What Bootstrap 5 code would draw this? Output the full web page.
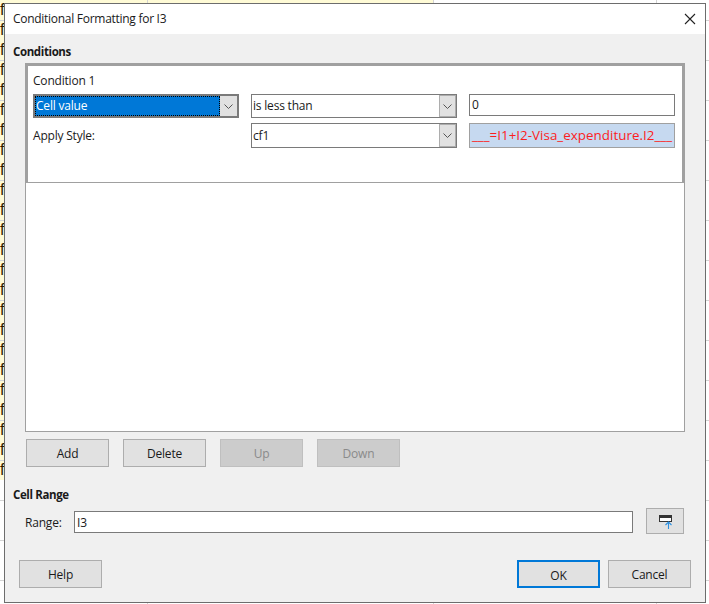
<!DOCTYPE html>
<html lang="en"><head><meta charset="utf-8"><title>Conditional Formatting for I3</title>
<link href="https://cdn.jsdelivr.net/npm/bootstrap@5.3.0/dist/css/bootstrap.min.css" rel="stylesheet">
<style>
html,body{height:604px;overflow:hidden}
body{background-color:#fff;padding:3px 0 0 4px;position:relative;font:12px/16px "Open Sans","Noto Sans",sans-serif;letter-spacing:-.2px;color:#1a1a1a;
 background-image:linear-gradient(#d4d4d4,#d4d4d4),linear-gradient(#d4d4d4,#d4d4d4),linear-gradient(#d4d4d4,#d4d4d4),repeating-linear-gradient(to bottom,transparent 0 20px,#d4d4d4 20px 21px,transparent 21px 40px),linear-gradient(#fffbd6,#fffbd6);
 background-size:1px 100%,1px 100%,1px 100%,100% 100%,433px 480px;background-position:147px 0,433px 0,656px 0,0 0,0 0;background-repeat:no-repeat}
.sheet-f{position:absolute;left:0;top:0;font:16px/20px "Liberation Sans",sans-serif;color:#2e1c00}
.sheet-f div{height:20px}
.dlg{width:702px;height:600px;border:1px solid #6d6d6d;background:#f0f0f0;position:relative;z-index:1;display:flex;flex-direction:column}
.dlg-title{height:30px;background:#fff;padding:0 9px 0 8px;letter-spacing:-.28px;flex:none}
.dlg-x{width:12px;height:12px}
.heading{font-weight:700;font-size:11.5px;letter-spacing:-.38px;padding-left:8px}
.heading-top{margin-top:10px}
.heading-range{margin-top:20px}
.cond-list{margin:3px 20px 0 20px;height:369px;background:#fff;border:1px solid #a0a0a0;flex:none}
.cond-entry{height:119px;border:2px solid #a0a0a0;border-bottom-width:1px;padding:7px 0 0 5px;margin:0}
.cond-grid{display:grid;grid-template-columns:206px 206px 206px;column-gap:12px;row-gap:5px;margin-top:5px;align-items:start}
.combo{height:24px;border:1px solid #7a7a7a;background:#fff;padding:3px 0 0 1px;display:flex;position:relative}
.combo.sel{background:#0078d7;color:#fff;border:2px solid #7a7a7a;padding:0;align-items:stretch}
.combo.sel .sel-txt{flex:1;margin-right:17px;padding:2px 0 0 1px;outline:1px dotted #000;outline-offset:-1px}
.combo.tall{height:25px;padding-top:4px}
.combo .arrow{position:absolute;right:0;top:0;bottom:0;width:17px;background:#e1e1e1;border:1px solid #adadad;display:flex;align-items:center;justify-content:center}
.combo.sel .arrow{border-width:0}
.fld{height:22px;border:1px solid #7a7a7a;background:#fff;padding:2px 0 0 2px}
.preview{height:25px;background:#c6d9f0;border:1px solid #a0a0a0;color:#fb1e1e;font-size:13.4px;line-height:18px;letter-spacing:.02px;padding-top:2px;white-space:nowrap;overflow:hidden;text-align:center}
.apply{padding-top:5px}
.act{width:83px;height:28px;background:#e1e1e1;border:1px solid #adadad;border-radius:0;padding:1px 0 0;font-size:12px;line-height:26px;letter-spacing:-.2px;color:#1a1a1a}
.act:disabled{background:#cccccc;border-color:#bfbfbf;color:#8a8a8a;opacity:1}
.act.def{border:2px solid #0078d7}
.act-row{gap:14px;margin:7px 0 0 21px}
.range-row{padding-left:20px;margin-top:5px}
.range-lbl{width:49px;padding-top:7px}
.range-row .fld{width:559px;margin-top:2px;padding-top:3px;margin-top:3px}
.shrink{width:38px;height:26px;background:#e1e1e1;border:1px solid #adadad;border-radius:0;padding:2px 0 0;margin-left:13px;display:flex;align-items:center;justify-content:center}
.foot{margin:26px 14px 0 14px}
.foot-right{gap:8px}
</style></head><body>
<div class="sheet-f" aria-hidden="true"><div>f</div><div>f</div><div>f</div><div>f</div><div>f</div><div>f</div><div>f</div><div>f</div><div>f</div><div>f</div><div>f</div><div>f</div><div>f</div><div>f</div><div>f</div><div>f</div><div>f</div><div>f</div><div>f</div><div>f</div><div>f</div><div>f</div><div>f</div><div>f</div></div>
<div class="dlg">
 <div class="dlg-title d-flex justify-content-between align-items-center"><span>Conditional Formatting for I3</span>
  <svg class="dlg-x" viewBox="0 0 12 12"><path d="M1 1 11 11M11 1 1 11" stroke="#222" stroke-width="1.1" fill="none"/></svg></div>
 <div class="heading heading-top">Conditions</div>
 <div class="cond-list"><div class="cond-entry">
  <div>Condition 1</div>
  <div class="cond-grid">
   <div class="combo sel"><span class="sel-txt">Cell value</span><span class="arrow"><svg width="9" height="5" viewBox="0 0 9 5"><path d="M.5.5 4.500 4.500 8.500.5" stroke="#555" fill="none"/></svg></span></div>
   <div class="combo"><span>is less than</span><span class="arrow"><svg width="9" height="5" viewBox="0 0 9 5"><path d="M.5.5 4.500 4.500 8.500.5" stroke="#555" fill="none"/></svg></span></div>
   <div class="fld">0</div>
   <div class="apply">Apply Style:</div>
   <div class="combo tall"><span>cf1</span><span class="arrow"><svg width="9" height="5" viewBox="0 0 9 5"><path d="M.5.5 4.500 4.500 8.500.5" stroke="#555" fill="none"/></svg></span></div>
   <div class="preview">___=I1+I2-Visa_expenditure.I2___</div>
  </div>
 </div></div>
 <div class="d-flex act-row">
  <button class="btn act">Add</button><button class="btn act">Delete</button><button class="btn act" disabled>Up</button><button class="btn act" disabled>Down</button>
 </div>
 <div class="heading heading-range">Cell Range</div>
 <div class="d-flex range-row align-items-start">
  <span class="range-lbl">Range:</span>
  <div class="fld">I3</div>
  <button class="btn shrink" aria-label="Shrink"><svg width="13" height="14" viewBox="0 0 13 14"><rect x=".5" y=".5" width="12" height="6" fill="#fff" stroke="#333"/><rect x="1" y="1" width="11" height="2" fill="#333"/><path d="M9.500 14V7M6.500 10 9.500 7 12.500 10" stroke="#2b8fe0" fill="none" stroke-width="1.1"/></svg></button>
 </div>
 <div class="d-flex foot justify-content-between">
  <button class="btn act">Help</button>
  <div class="d-flex foot-right"><button class="btn act def">OK</button><button class="btn act">Cancel</button></div>
 </div>
</div>
</body></html>
